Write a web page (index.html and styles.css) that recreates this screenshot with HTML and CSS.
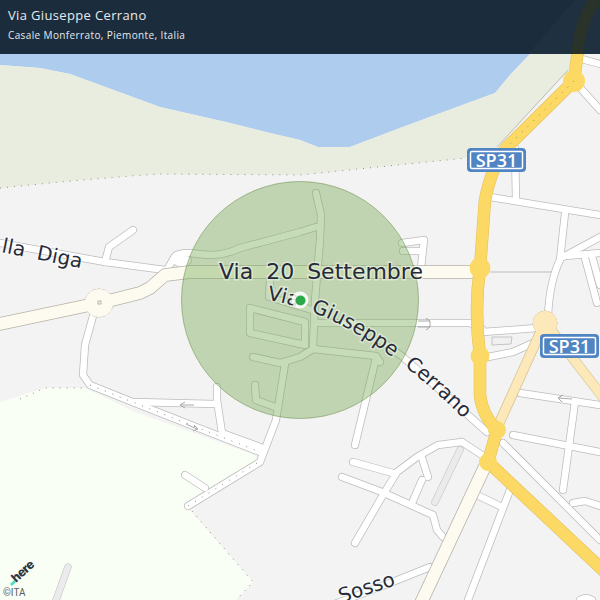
FILE: index.html
```html
<!DOCTYPE html>
<html lang="it">
<head>
<meta charset="utf-8">
<title>Via Giuseppe Cerrano</title>
<link rel="stylesheet" href="styles.css">
</head>
<body>
<main class="screen">
  <svg class="map" viewBox="0 0 600 600" width="600" height="600" xmlns="http://www.w3.org/2000/svg">
    <defs>
      <g id="minor">
        <path d="M0 243L105 262L165 270"/>
        <path d="M105 262L109 247L133 230"/>
        <path d="M167 270L175 256Q178 253 190 253Q205 255 213 255Q228 254 240 248L300 232L316 227"/>
        <path d="M177 262L182 258L188 260L184 266Z"/>
        <path d="M316 193L321 215L320 240L315 300L313 347"/>
        <path d="M270 280L269 297L312 310"/>
        <path d="M250 308L305 322L305 345L250 333Z"/>
        <path d="M253 357L280 363L300 357L313 349L376 356L380 362"/>
        <path d="M285 364L276 420L260 462L188 506"/>
        <path d="M185 475L205 488"/>
        <path d="M376 358L355 445"/>
        <path d="M255 385L256 400L275 407"/>
        <path d="M93 316L85 345L83 375L90 385L140 405L260 452"/>
        <path d="M217 387L217 400L222 433L260 447"/>
        <path d="M135 402L215 404"/>
        <path d="M315 323L470 323L482 329"/>
        <path d="M402 243L424 240L421 268"/>
        <path d="M403 251L421 251"/>
        <path d="M380 340L403 357L487 432"/>
        <path d="M503 443L600 540"/>
        <path d="M490 197L600 215"/>
        <path d="M515 148L516 200"/>
        <path d="M565 213L560 260Q550 280 548 315"/>
        <path d="M563 257L600 237"/>
        <path d="M565 256L600 253"/>
        <path d="M585 258L597 303"/>
        <path d="M592 256L600 285"/>
        <path d="M483 332L537 328"/>
        <path d="M488 357L513 352L533 343"/>
        <path d="M575 82L600 110"/>
        <path d="M578 58L600 64"/>
        <path d="M520 393L600 405"/>
        <path d="M513 435L600 452"/>
        <path d="M575 402L563 490"/>
        <path d="M573 503L585 501L600 506"/>
        <path d="M510 490L468 600"/>
        <path d="M477 495L502 507"/>
        <path d="M462 442L438 445L417 457L397 472L383 495L355 543"/>
        <path d="M462 442L482 455"/>
        <path d="M353 462L393 473"/>
        <path d="M342 477L382 492L433 515L437 530L443 537"/>
        <path d="M422 458L428 477"/>
        <path d="M422 480L412 503"/>
        <path d="M430 567L390 583L332 605"/>
        <path d="M580 600Q586 596 592 600"/>
      </g>
      <path id="cerrano-line" d="M267 300C325 308 400 350 480 436"/>
    </defs>

    <rect class="ground" width="600" height="600"/>
    <path class="water" d="M0 0H600V54L530 54L510 75L495 93L400 128L350 147H318L300 140L270 133L230 123L160 107L100 85L70 74L40 68L0 65Z"/>
    <path class="bank" d="M0 65L40 68L70 74L100 85L160 107L230 123L270 133L300 140L318 147H350L400 128L495 93L510 75L530 54H575L569 70L498 147L466 158L300 175L160 174L130 176L60 182L0 188Z"/>
    <path class="boundary" d="M0 188L60 182L130 176L160 174L300 175L466 158"/>
    <path class="meadow" d="M0 402L45 388L85 388L135 412L185 430L255 455L258 462L188 508L253 582L236 600H0Z"/>
    <path class="boundary" d="M20 399L45 388L85 388M192 511L253 582L236 600"/>

    <g class="grey-casing">
      <path d="M68 567L55 603"/>
      <path d="M460 450L435 502"/>
    </g>
    <g class="grey-fill">
      <path d="M68 567L55 603"/>
      <path d="M460 450L435 502"/>
    </g>

    <use href="#minor" class="road-casing"/>
    <path class="thin" d="M490 272H556M497 147L568 70"/>
    <use href="#minor" class="road-fill"/>
    <path class="thin-box" d="M492 337L512 337L511 344L492 345Z"/>
    <path class="road-dots" d="M90 385L140 405L260 452M257 463L188 506"/>

    <g class="local-casing">
      <path d="M0 324L99 303"/>
      <path d="M99 303L112 300L140 293L150 288L165 275L190 272H480"/>
      <path d="M487 462L420 605"/>
      <circle cx="99" cy="303" r="14"/>
    </g>
    <g class="local-fill">
      <path d="M0 324L99 303"/>
      <path d="M99 303L112 300L140 293L150 288L165 275L190 272H480"/>
      <path d="M487 462L420 605"/>
      <circle cx="99" cy="303" r="14"/>
    </g>
    <rect class="hub" x="98" y="301" width="3" height="3"/>

    <g class="regional-casing">
      <path d="M545 322L497 428"/>
      <path d="M545 322L605 400"/>
      <circle cx="545" cy="323" r="12"/>
    </g>
    <g class="regional-fill">
      <path d="M545 322L497 428"/>
      <path d="M545 322L605 400"/>
      <circle cx="545" cy="323" r="12"/>
    </g>

    <g class="main-casing">
      <path d="M578 50L574 81L507 147Q492 165 485 200L480 268Q474 310 480 356L480 395Q482 415 497 430L488 462L605 572"/>
    </g>
    <g class="main-fill">
      <path d="M578 50L574 81L507 147Q492 165 485 200L480 268Q474 310 480 356L480 395Q482 415 497 430L488 462L605 572"/>
      <circle cx="574" cy="81" r="11"/>
      <circle cx="480" cy="268" r="10.5"/>
      <circle cx="480" cy="356" r="9.5"/>
      <circle cx="497" cy="430" r="9"/>
      <circle cx="488" cy="462" r="9"/>
    </g>
    <path class="main-dots" d="M574 81L507 147"/>

    <path class="arrow" d="M418 321H430L426 318M418 327H430L426 330M430 321V327"/>
    <path class="arrow" d="M572 399L559 398M563 395L558 398L562 402"/>
    <path class="arrow" d="M194 405H181M185 402L180 405L185 408"/>
    <path class="arrow" d="M186 424L197 429M194 425L198 429L193 431"/>

    <circle class="accuracy" cx="300" cy="300" r="118.5"/>

    <g class="labels">
      <text class="label label-large" x="219" y="279">Via 20 Settembre</text>
      <text class="label label-path"><textPath href="#cerrano-line">Via Giuseppe Cerrano</textPath></text>
      <text class="label" transform="translate(1 252) rotate(11.5)">lla Diga</text>
      <text class="label" transform="translate(-13 333) rotate(-14)">o</text>
      <text class="label" transform="translate(341 603) rotate(-18)">Sosso</text>
    </g>

    <circle class="pin-halo" cx="300" cy="300" r="8.5"/>
    <circle class="pin" cx="300.5" cy="300.5" r="5"/>

    <g class="shield">
      <rect class="shield-outer" x="467" y="148" width="59" height="24" rx="4"/>
      <rect class="shield-line" x="470.500" y="151.500" width="52" height="17" rx="1.500"/>
      <text class="shield-text" x="496.500" y="166.500">SP31</text>
    </g>
    <g class="shield">
      <rect class="shield-outer" x="540" y="334" width="59" height="24" rx="4"/>
      <rect class="shield-line" x="543.500" y="337.500" width="52" height="17" rx="1.500"/>
      <text class="shield-text" x="569.500" y="352.500">SP31</text>
    </g>

    <path class="here-tick" d="M11 585L15 581" />
    <text class="here" transform="translate(16 583) rotate(-42)">here</text>
    <text class="copyright" x="3" y="596">©ITA</text>
  </svg>

  <header class="header">
    <svg class="header-ghost" viewBox="0 0 600 54" width="600" height="54" xmlns="http://www.w3.org/2000/svg">
      <path class="ghost-bank" d="M528 54L575 0H600V54Z"/>
      <path class="ghost-road" d="M597 -2Q580 20 577 56"/>
    </svg>
    <h1 class="title">Via Giuseppe Cerrano</h1>
    <p class="subtitle">Casale Monferrato, Piemonte, Italia</p>
  </header>
</main>
</body>
</html>
```
FILE: styles.css
```css
* { box-sizing: border-box; }

html, body {
  margin: 0;
  padding: 0;
  background: #f4f3f3;
}

.screen {
  position: relative;
  width: 600px;
  height: 600px;
  overflow: hidden;
}

.map {
  position: absolute;
  inset: 0;
  display: block;
}

.header {
  position: absolute;
  top: 0;
  left: 0;
  right: 0;
  height: 54px;
  padding: 8px 8px 0;
  background: #1b2d3d;
  color: #eef1f3;
  font-family: "Open Sans", "Noto Sans", sans-serif;
  overflow: hidden;
}

.header-ghost {
  position: absolute;
  inset: 0;
}

.title {
  position: relative;
  margin: 0;
  font-size: 13px;
  line-height: 15px;
  font-weight: 400;
  letter-spacing: 0.35px;
  color: #e6eaed;
}

.subtitle {
  position: relative;
  margin: 5px 0 0;
  font-size: 10px;
  line-height: 14px;
  letter-spacing: 0.38px;
  color: #e6eaed;
}

.ghost-bank { fill: #1f3040; }
.ghost-road { fill: none; stroke: #29332a; stroke-width: 12; }

.ground { fill: #f4f3f3; }
.water { fill: #aecdee; }
.bank { fill: #e9eddf; }
.meadow { fill: #fafff5; }
.boundary {
  fill: none;
  stroke: #8d8d80;
  stroke-width: 1;
  stroke-dasharray: 1 6;
}

.road-casing, .road-fill, .grey-casing, .grey-fill,
.local-casing, .local-fill, .regional-casing, .regional-fill,
.main-casing, .main-fill {
  fill: none;
  stroke-linecap: round;
  stroke-linejoin: round;
}

.road-casing { stroke: #bcbcbc; stroke-width: 8; }
.road-fill { stroke: #ffffff; stroke-width: 6.5; }
.road-dots {
  fill: none;
  stroke: #8a8a8a;
  stroke-width: 1;
  stroke-dasharray: 1 7;
}

.grey-casing { stroke: #cdcdcd; stroke-width: 7.5; }
.grey-fill { stroke: #ebebeb; stroke-width: 6; }

.local-casing { stroke: #b4b2a6; stroke-width: 13.5; }
.local-fill { stroke: #fdfbf0; stroke-width: 12; }
.local-casing circle { fill: #fdfbf0; stroke-width: 1; }
.local-fill circle { fill: #fdfbf0; stroke: none; }
.hub { fill: #fdfbf0; stroke: #888; stroke-width: 0.6; }

.regional-casing { stroke: #d8c596; stroke-width: 10.5; }
.regional-fill { stroke: #fce8b9; stroke-width: 9; }
.regional-casing circle { fill: #fce8b9; stroke-width: 1; }
.regional-fill circle { fill: #fce8b9; stroke: none; }

.main-casing { stroke: #e0bd5e; stroke-width: 12.5; }
.main-fill { stroke: #fcd964; stroke-width: 11.5; }
.main-fill circle { fill: #fcd964; stroke: none; }
.main-dots {
  fill: none;
  stroke: #9b8a4a;
  stroke-width: 1;
  stroke-dasharray: 1 7;
}

.thin { fill: none; stroke: #bdbdbd; stroke-width: 1; }
.thin-box { fill: #f0f0f0; stroke: #c4c4c4; stroke-width: 1; }
.arrow { fill: none; stroke: #a8a8a8; stroke-width: 1; }

.accuracy {
  fill: rgba(120, 170, 85, 0.42);
  stroke: rgba(95, 135, 65, 0.5);
  stroke-width: 1;
}

.label {
  font-family: "DejaVu Sans", sans-serif;
  font-size: 20px;
  word-spacing: 6px;
  fill: #262b38;
  stroke: rgba(255, 255, 255, 0.45);
  stroke-width: 3px;
  paint-order: stroke;
}

.label-large { font-size: 22px; }
.label-path { word-spacing: 8px; }

.pin-halo { fill: rgba(255, 255, 255, 0.85); }
.pin { fill: #2da84a; }

.shield-outer { fill: #5085c3; }
.shield-line { fill: #5085c3; stroke: #ffffff; stroke-width: 1.500; }
.shield-text {
  font-family: "Open Sans", "Noto Sans", sans-serif;
  font-size: 18px;
  font-weight: 600;
  fill: #ffffff;
  text-anchor: middle;
}

.here-tick { stroke: #48dbc5; stroke-width: 2.500; fill: none; }
.here {
  font-family: "Inter", "Liberation Sans", sans-serif;
  font-size: 12.500px;
  font-weight: 800;
  letter-spacing: -0.6px;
  fill: #2d3540;
}
.copyright {
  font-family: "Roboto", "Liberation Sans", sans-serif;
  font-size: 10px;
  fill: #5c5c5c;
}
```
